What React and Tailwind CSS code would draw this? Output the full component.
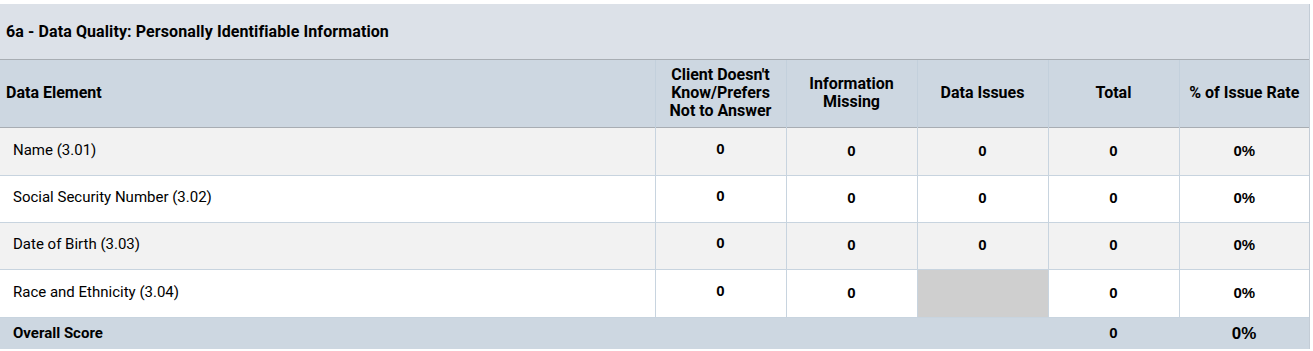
export default function App() {
  const rows = [
    { name: "Name (3.01)", vals: ["0", "0", "0", "0", "0%"], bg: "bg-[#f2f2f2]", h: "h-[48px]" },
    { name: "Social Security Number (3.02)", vals: ["0", "0", "0", "0", "0%"], bg: "bg-white", h: "h-[47px]" },
    { name: "Date of Birth (3.03)", vals: ["0", "0", "0", "0", "0%"], bg: "bg-[#f2f2f2]", h: "h-[47px]" },
    { name: "Race and Ethnicity (3.04)", vals: ["0", "0", null, "0", "0%"], bg: "bg-white", h: "h-[48px]" },
  ];
  const heads = [
    ["Client Doesn't", "Know/Prefers", "Not to Answer"],
    ["Information", "Missing"],
    ["Data Issues"],
    ["Total"],
    ["% of Issue Rate"],
  ];
  const num = { fontFamily: "'Liberation Sans', Arial, sans-serif" };
  return (
    <div className="pt-1 bg-white" style={{ fontFamily: "Roboto, 'Liberation Sans', sans-serif" }}>
      <div className="w-[1310px] border-r border-[#c3ccd6]">
        <div className="h-[56px] bg-[#dce1e8] flex items-center px-[6px] text-[16px] font-bold text-black border-b border-[#a8adb3] tracking-[0.1px]">
          6a - Data Quality: Personally Identifiable Information
        </div>
        <table className="w-[1309px] border-collapse table-fixed text-black">
          <colgroup>
            <col className="w-[655px]" />
            <col className="w-[131px]" />
            <col className="w-[131px]" />
            <col className="w-[131px]" />
            <col className="w-[131px]" />
            <col className="w-[130px]" />
          </colgroup>
          <thead>
            <tr className="h-[67px] bg-[#cdd7e1] border-b border-[#a8adb3]">
              <th className="text-left px-[6px] text-[16px] font-bold">Data Element</th>
              {heads.map((h, i) => (
                <th key={i} className="text-center text-[16px] font-bold leading-[18px] border-l border-[#c3d0dc]">
                  {h.map((l, j) => (
                    <div key={j}>{l}</div>
                  ))}
                </th>
              ))}
            </tr>
          </thead>
          <tbody>
            {rows.map((r, i) => (
              <tr key={i} className={`${r.h} ${r.bg} border-b border-[#c8d4df]`}>
                <td className="px-[13px] text-[15px] pb-[2px]">{r.name}</td>
                {r.vals.map((v, j) =>
                  v === null ? (
                    <td key={j} className="bg-[#cfcfcf] border-l border-[#c8d4df]"></td>
                  ) : (
                    <td
                      key={j}
                      className={`text-center text-[15px] font-bold border-l border-[#c8d4df] ${j === 0 ? "pb-[4px]" : ""}`}
                      style={num}
                    >
                      {v}
                    </td>
                  )
                )}
              </tr>
            ))}
            <tr className="h-[32px] bg-[#cdd7e1]">
              <td className="px-[13px] text-[15px] font-bold">Overall Score</td>
              <td></td>
              <td></td>
              <td></td>
              <td className="text-center text-[15px] font-bold" style={num}>0</td>
              <td className="text-center text-[17px] font-bold" style={num}>0%</td>
            </tr>
          </tbody>
        </table>
      </div>
    </div>
  );
}
